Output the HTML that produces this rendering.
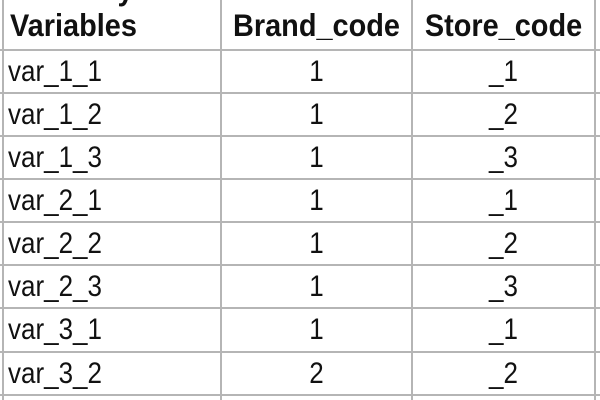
<!DOCTYPE html>
<html><head><style>
body{margin:0;width:600px;height:400px;background:#fff;overflow:hidden;position:relative;font-family:"Liberation Sans",Arial,sans-serif;color:#111}
.h{position:absolute;left:0;width:600px;height:2px;background:#b5b5b5}
.v{position:absolute;top:0;height:400px;width:2px;background:#b5b5b5}
.t{position:absolute;font-size:26px;line-height:30px;white-space:nowrap;transform:scaleY(1.15);transform-origin:50% 80%}
.b{font-weight:bold;font-size:27px;transform:scale(1.07,1.15)}
.c{text-align:center}
</style></head><body>
<div class="v" style="left:2px"></div>
<div class="v" style="left:220px"></div>
<div class="v" style="left:411px"></div>
<div class="v" style="left:594px"></div>
<div class="h" style="top:49px"></div>
<div class="h" style="top:92px"></div>
<div class="h" style="top:135px"></div>
<div class="h" style="top:178px"></div>
<div class="h" style="top:221px"></div>
<div class="h" style="top:264px"></div>
<div class="h" style="top:307px"></div>
<div class="h" style="top:351px"></div>
<div class="h" style="top:394px"></div>
<div class="t b" style="left:118px;top:-24px">y</div>
<div class="t b" style="left:10px;top:12px;transform-origin:0 80%">Variables</div>
<div class="t b c" style="left:222px;width:189px;top:12px">Brand_code</div>
<div class="t b c" style="left:413px;width:181px;top:12px">Store_code</div>
<div class="t" style="left:8px;top:57px">var_1_1</div><div class="t c" style="left:222px;width:189px;top:57px">1</div><div class="t c" style="left:413px;width:181px;top:57px">_1</div>
<div class="t" style="left:8px;top:100px">var_1_2</div><div class="t c" style="left:222px;width:189px;top:100px">1</div><div class="t c" style="left:413px;width:181px;top:100px">_2</div>
<div class="t" style="left:8px;top:143px">var_1_3</div><div class="t c" style="left:222px;width:189px;top:143px">1</div><div class="t c" style="left:413px;width:181px;top:143px">_3</div>
<div class="t" style="left:8px;top:186px">var_2_1</div><div class="t c" style="left:222px;width:189px;top:186px">1</div><div class="t c" style="left:413px;width:181px;top:186px">_1</div>
<div class="t" style="left:8px;top:229px">var_2_2</div><div class="t c" style="left:222px;width:189px;top:229px">1</div><div class="t c" style="left:413px;width:181px;top:229px">_2</div>
<div class="t" style="left:8px;top:272px">var_2_3</div><div class="t c" style="left:222px;width:189px;top:272px">1</div><div class="t c" style="left:413px;width:181px;top:272px">_3</div>
<div class="t" style="left:8px;top:315px">var_3_1</div><div class="t c" style="left:222px;width:189px;top:315px">1</div><div class="t c" style="left:413px;width:181px;top:315px">_1</div>
<div class="t" style="left:8px;top:359px">var_3_2</div><div class="t c" style="left:222px;width:189px;top:359px">2</div><div class="t c" style="left:413px;width:181px;top:359px">_2</div>
</body></html>
